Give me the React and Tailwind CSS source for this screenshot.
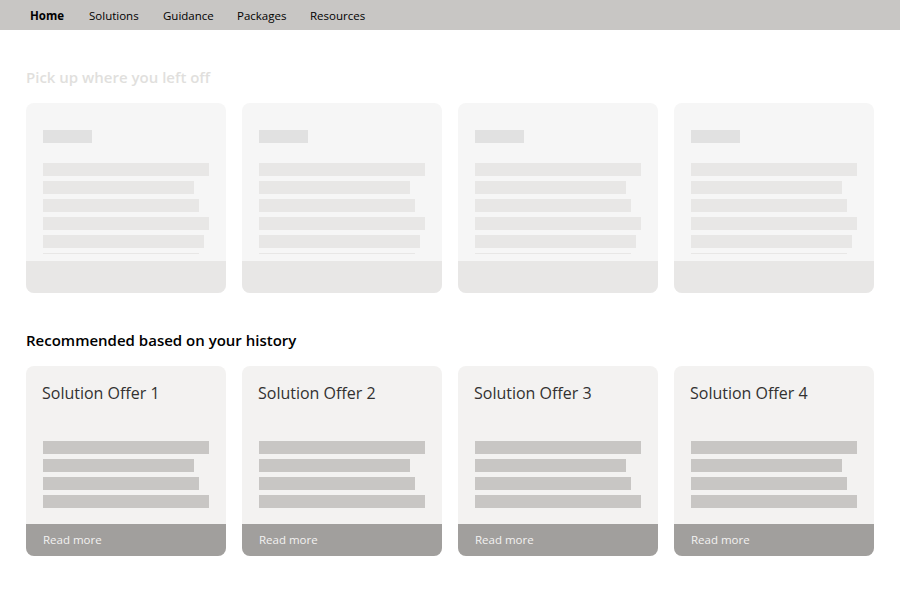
import React from "react";

const widths = [166, 151, 156, 166, 161];

function GhostCard() {
  return (
    <div className="w-[200px] h-[190px] rounded-lg bg-[#f6f6f6] overflow-hidden flex flex-col">
      <div className="flex-1 px-[17px] pt-[27px]">
        <div className="w-[49px] h-[13px] bg-[#e1e1e1]" />
        <div className="mt-[20px] flex flex-col gap-[5px]">
          {widths.map((w, i) => (
            <div key={i} className="h-[13px] bg-[#e8e7e6]" style={{ width: w }} />
          ))}
        </div>
        <div className="mt-[5px] h-px w-[156px] bg-[#e8e7e6]" />
      </div>
      <div className="h-[32px] bg-[#e8e7e6]" />
    </div>
  );
}

function OfferCard({ n }) {
  return (
    <div className="w-[200px] h-[190px] rounded-lg bg-[#f3f2f1] overflow-hidden flex flex-col">
      <div className="flex-1 px-[17px] pt-[16px]">
        <div className="text-[16px] leading-[22px] text-[#323130] -ml-px">Solution Offer {n}</div>
        <div className="mt-[37px] flex flex-col gap-[5px]">
          {widths.slice(0, 4).map((w, i) => (
            <div key={i} className="h-[13px] bg-[#c8c6c4]" style={{ width: w }} />
          ))}
        </div>
      </div>
      <div className="h-[32px] bg-[#a19f9d] px-[17px] flex items-center text-[11.5px] text-[#f3f2f1]">
        Read more
      </div>
    </div>
  );
}

export default function App() {
  return (
    <div className="w-[900px] h-[600px] bg-white" style={{ fontFamily: '"Open Sans", "Noto Sans", sans-serif' }}>
      <nav className="h-[30px] bg-[#c8c6c4] flex items-center pl-[30px] pt-[2px] text-[11.5px] text-black">
        <span className="font-bold w-[59px]">Home</span>
        <span className="w-[74px]">Solutions</span>
        <span className="w-[74px]">Guidance</span>
        <span className="w-[73px]">Packages</span>
        <span>Resources</span>
      </nav>
      <div className="px-[26px]">
        <h2 className="mt-[37px] text-[15px] leading-[20px] font-semibold text-[#e1dfdd]">Pick up where you left off</h2>
        <div className="mt-[16px] flex gap-[16px]">
          {[1, 2, 3, 4].map((i) => (
            <GhostCard key={i} />
          ))}
        </div>
        <h2 className="mt-[37px] text-[15px] leading-[20px] font-semibold text-black">Recommended based on your history</h2>
        <div className="mt-[16px] flex gap-[16px]">
          {[1, 2, 3, 4].map((i) => (
            <OfferCard key={i} n={i} />
          ))}
        </div>
      </div>
    </div>
  );
}
